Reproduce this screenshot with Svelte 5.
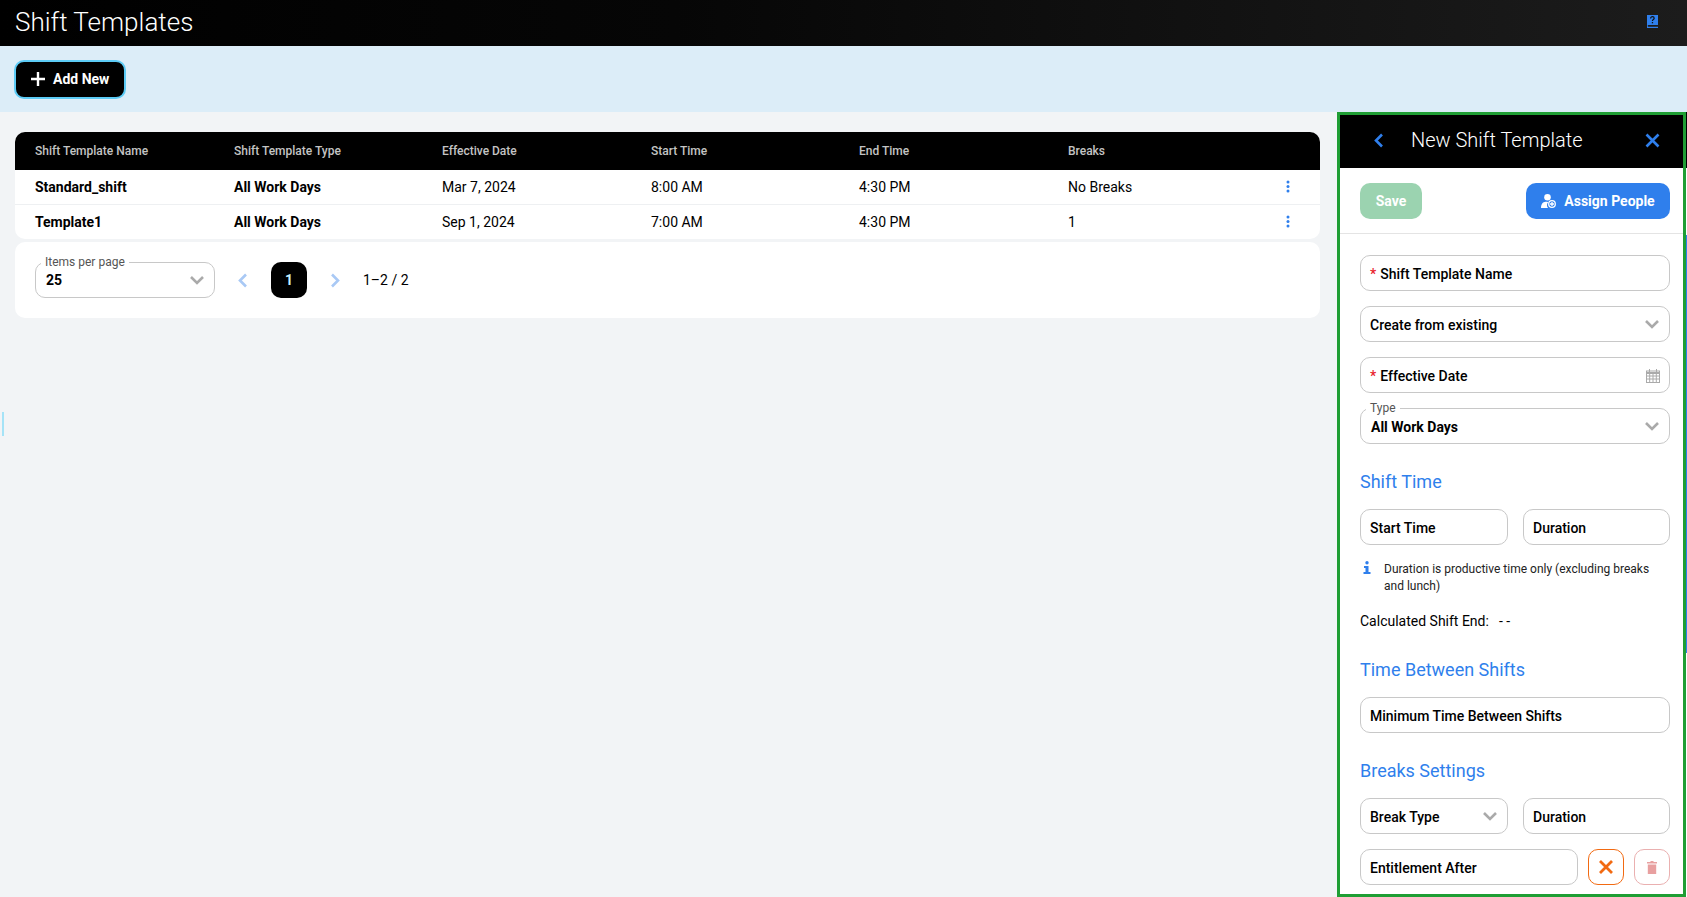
<script>
	const columns = ['Shift Template Name', 'Shift Template Type', 'Effective Date', 'Start Time', 'End Time', 'Breaks'];
	const rows = [
		{ name: 'Standard_shift', type: 'All Work Days', date: 'Mar 7, 2024', start: '8:00 AM', end: '4:30 PM', breaks: 'No Breaks' },
		{ name: 'Template1', type: 'All Work Days', date: 'Sep 1, 2024', start: '7:00 AM', end: '4:30 PM', breaks: '1' }
	];
</script>

{#snippet chevron()}
	<svg class="chevron" width="16" height="10" viewBox="0 0 16 10" fill="none">
		<path d="M2 2l6 6 6-6" stroke="#aaa" stroke-width="2.6" />
	</svg>
{/snippet}

<div class="page">
	<header class="topbar">
		<h1>Shift Templates</h1>
		<svg class="help" width="11" height="13" viewBox="0 0 11 13">
			<path d="M0 0h11v10H1.500a.8.800 0 0 0 0 1.700H11V13H0z" fill="#2f7fec" />
			<path d="M3.600 3.400C3.600 2.200 4.500 1.700 5.400 1.700s1.800.6 1.800 1.600c0 1.300-1.800 1.300-1.800 2.700" fill="none" stroke="#111" stroke-width="1.200" />
			<rect x="4.800" y="7" width="1.300" height="1.300" fill="#111" />
		</svg>
	</header>

	<div class="toolbar">
		<button class="add" type="button">
			<svg width="14" height="14" viewBox="0 0 14 14"><path d="M7 0v14M0 7h14" stroke="#fff" stroke-width="2.400" /></svg>
			Add New
		</button>
	</div>

	<div class="main">
		<section class="content">
			<div class="table">
				<div class="row head">
					{#each columns as col}
						<div>{col}</div>
					{/each}
				</div>
				{#each rows as row}
					<div class="row body">
						<div class="strong">{row.name}</div>
						<div class="strong">{row.type}</div>
						<div>{row.date}</div>
						<div>{row.start}</div>
						<div>{row.end}</div>
						<div class="breaks">
							{row.breaks}
							<svg width="4" height="13" viewBox="0 0 4 13" fill="#2f7fec">
								<circle cx="2" cy="2" r="1.500" /><circle cx="2" cy="6.500" r="1.500" /><circle cx="2" cy="11" r="1.500" />
							</svg>
						</div>
					</div>
				{/each}
			</div>

			<div class="pager">
				<div class="field per-page">
					<span class="legend">Items per page</span>
					<span class="value">25</span>
					{@render chevron()}
				</div>
				<svg class="arrow" width="11" height="15" viewBox="0 0 11 15" fill="none"><path d="M9 1.500L3 7.500l6 6" stroke="#a9c9f5" stroke-width="2.600" /></svg>
				<button class="page-num" type="button">1</button>
				<svg class="arrow" width="11" height="15" viewBox="0 0 11 15" fill="none"><path d="M2 1.500l6 6-6 6" stroke="#a9c9f5" stroke-width="2.600" /></svg>
				<span class="count">1–2 / 2</span>
			</div>
		</section>

		<aside class="panel">
			<div class="panel-head">
				<svg width="11" height="15" viewBox="0 0 11 15" fill="none"><path d="M9 1.500L3 7.500l6 6" stroke="#2f7fec" stroke-width="2.600" /></svg>
				<h2>New Shift Template</h2>
				<svg width="15" height="15" viewBox="0 0 15 15" fill="none"><path d="M1.500 1.500l12 12M13.500 1.500l-12 12" stroke="#2f7fec" stroke-width="2.600" /></svg>
			</div>

			<div class="actions">
				<button class="save" type="button">Save</button>
				<button class="assign" type="button">
					<svg width="15" height="14" viewBox="0 0 15 14" fill="#fff">
						<circle cx="6.500" cy="3.300" r="3.300" />
						<path d="M0 14c0-4 1.800-6 4.500-6.300 1-.1 2 0 2.700.5-1.500 1.500-1.700 4-.2 5.800z" />
						<circle cx="11" cy="10" r="3.300" fill="none" stroke="#fff" stroke-width="1.300" />
						<path d="M11 8v4M9 10h4" stroke="#fff" stroke-width="1.300" />
					</svg>
					Assign People
				</button>
			</div>

			<div class="form">
				<div class="field"><span class="req">*</span>Shift Template Name</div>
				<div class="field between">Create from existing{@render chevron()}</div>
				<div class="field between">
					<span><span class="req">*</span>Effective Date</span>
					<svg width="14" height="14" viewBox="0 0 14 14" fill="none" stroke="#aaa">
						<rect x=".5" y="2" width="13" height="11.500" />
						<path d="M0 4h14" stroke-width="2" /><path d="M3.500 0v3M10.500 0v3M.5 7h13M.5 10h13M3.700 4v9M7 4v9M10.300 4v9" />
					</svg>
				</div>
				<div class="field between typed">
					<span class="legend">Type</span>
					<span class="value">All Work Days</span>
					{@render chevron()}
				</div>

				<h3 class="first">Shift Time</h3>
				<div class="two">
					<div class="field">Start Time</div>
					<div class="field">Duration</div>
				</div>
				<div class="note">
					<svg width="8" height="13" viewBox="0 0 8 13" fill="#2f7fec">
						<circle cx="4" cy="1.800" r="1.700" /><path d="M1 5h4.500v6H7.500v2H.5v-2h2V7H1z" />
					</svg>
					<p>Duration is productive time only (excluding breaks and lunch)</p>
				</div>
				<div class="calc"><span>Calculated Shift End:</span><span>- -</span></div>

				<h3 class="between-shifts">Time Between Shifts</h3>
				<div class="field">Minimum Time Between Shifts</div>

				<h3 class="breaks-title">Breaks Settings</h3>
				<div class="two">
					<div class="field between">Break Type{@render chevron()}</div>
					<div class="field">Duration</div>
				</div>
				<div class="entitlement">
					<div class="field">Entitlement After</div>
					<button class="icon-btn cancel" type="button">
						<svg width="14" height="14" viewBox="0 0 14 14" fill="none"><path d="M1 1l12 12M13 1L1 13" stroke="#f26a12" stroke-width="2.800" /></svg>
					</button>
					<button class="icon-btn remove" type="button">
						<svg width="10" height="13" viewBox="0 0 10 13" fill="#e8a0a0"><path d="M3.500 0h3v1H10v1.500H0V1h3.500zM.8 3.500h8.400V13H.8z" /></svg>
					</button>
				</div>
			</div>
		</aside>
	</div>

	<span class="edge"></span>
	<span class="panel-edge"></span>
</div>

<style>
	:global(body) {
		margin: 0;
		font-family: Roboto, sans-serif;
		overflow: hidden;
	}

	.page {
		position: relative;
		display: flex;
		flex-direction: column;
		height: 897px;
		background: #f2f4f6;
		color: #000;
		font-size: 14px;
	}

	.topbar {
		display: flex;
		align-items: center;
		justify-content: space-between;
		box-sizing: border-box;
		height: 46px;
		padding: 0 29px 2px 15px;
		background: linear-gradient(90deg, #000 0%, #060606 40%, #1c1c1c 100%);
	}

	.help {
		margin-bottom: 1px;
	}

	h1 {
		margin: 0;
		color: #fff;
		font-size: 26px;
		font-weight: 300;
	}

	.toolbar {
		display: flex;
		align-items: center;
		height: 66px;
		padding-left: 14px;
		background: #dcedf8;
	}

	.add {
		display: flex;
		align-items: center;
		gap: 8px;
		height: 39px;
		padding: 0 15px;
		border: 2px solid #5ccbf5;
		border-radius: 10px;
		background: #000;
		color: #fff;
		font: 700 14px Roboto, sans-serif;
	}

	.main {
		display: flex;
		flex: 1;
		min-height: 0;
	}

	.content {
		flex: 1;
		padding: 20px 17px 0 15px;
	}

	.table {
		overflow: hidden;
		border-radius: 10px;
		background: #fff;
	}

	.row {
		display: grid;
		grid-template-columns: 199px 208px 209px 208px 209px 1fr;
		align-items: center;
		padding: 0 30px 0 20px;
	}

	.head {
		height: 38px;
		background: #000;
		color: #c4c4c4;
		font-size: 12px;
		font-weight: 500;
	}

	.body {
		height: 34px;
		padding-bottom: 1px;
		box-sizing: border-box;
	}

	.body + .body {
		border-top: 1px solid #eef0f2;
		height: 35px;
	}

	.strong {
		font-weight: 700;
	}

	.breaks {
		display: flex;
		align-items: center;
		justify-content: space-between;
	}

	.pager {
		display: flex;
		align-items: center;
		height: 76px;
		margin-top: 3px;
		padding-left: 20px;
		border-radius: 10px;
		background: #fff;
	}

	.field {
		position: relative;
		display: flex;
		align-items: center;
		box-sizing: border-box;
		height: 36px;
		padding: 1px 9px 0;
		border: 1px solid #c8c8c8;
		border-radius: 10px;
		background: #fff;
		font-weight: 500;
		white-space: nowrap;
	}

	.between {
		justify-content: space-between;
	}

	.between :global(.chevron) {
		margin-top: -1px;
	}

	.req {
		margin-right: 4px;
		color: #e8202a;
	}

	.legend {
		position: absolute;
		top: -7px;
		left: 5px;
		padding: 0 4px;
		background: #fff;
		color: #555;
		font-size: 12px;
		font-weight: 400;
		line-height: 13px;
	}

	.value {
		padding-left: 1px;
		font-weight: 700;
	}

	.per-page {
		justify-content: space-between;
		width: 180px;
		margin-right: 22px;
		padding: 0 9px;
	}

	.arrow {
		flex: none;
	}

	.page-num {
		width: 36px;
		height: 36px;
		margin: 0 23px;
		border: 0;
		border-radius: 10px;
		background: #000;
		color: #c8f0fb;
		font: 700 14px Roboto, sans-serif;
	}

	.count {
		margin-left: 22px;
	}

	.panel {
		flex: none;
		box-sizing: border-box;
		width: 349px;
		height: 785px;
		margin-right: 1px;
		overflow: hidden;
		border: 3px solid #1f9e34;
		background: #fff;
	}

	.panel-head {
		display: flex;
		align-items: center;
		box-sizing: border-box;
		height: 53px;
		padding: 0 23px 3px 33px;
		background: #000;
	}

	h2 {
		flex: 1;
		margin: 0 0 0 27px;
		color: #fff;
		font-size: 20px;
		font-weight: 300;
	}

	.actions {
		display: flex;
		align-items: center;
		justify-content: space-between;
		height: 66px;
		padding: 0 13px 0 20px;
		border-bottom: 1px solid #e4e4e4;
		box-sizing: border-box;
	}

	.save,
	.assign {
		display: flex;
		align-items: center;
		justify-content: center;
		height: 36px;
		border: 0;
		border-radius: 10px;
		color: #fff;
		font: 700 14px Roboto, sans-serif;
	}

	.save {
		width: 62px;
		background: #9bd3b0;
	}

	.assign {
		gap: 8px;
		width: 144px;
		background: #2f7fec;
	}

	.form {
		display: flex;
		flex-direction: column;
		gap: 15px;
		padding: 21px 13px 0 20px;
	}

	h3 {
		margin: 0;
		color: #2f7fec;
		font-size: 18px;
		font-weight: 400;
		line-height: 22px;
	}

	h3.first {
		margin-top: 12px;
		margin-bottom: 1px;
	}

	h3.between-shifts {
		margin-top: 15px;
		margin-bottom: 1px;
	}

	h3.breaks-title {
		margin-top: 12px;
		margin-bottom: 1px;
	}

	.two {
		display: grid;
		grid-template-columns: 148px 147px;
		gap: 15px;
	}

	.note {
		display: flex;
		gap: 13px;
		margin-top: 1px;
		padding-left: 3px;
		color: #222;
		font-size: 12px;
		line-height: 17px;
	}

	.note svg {
		flex: none;
	}

	.note p {
		margin: 0;
	}

	.calc {
		display: flex;
		gap: 10px;
		margin-top: 3px;
	}

	.entitlement {
		display: flex;
		gap: 10px;
	}

	.entitlement .field {
		flex: 1;
	}

	.icon-btn {
		display: flex;
		align-items: center;
		justify-content: center;
		flex: none;
		width: 36px;
		height: 36px;
		padding: 0;
		border-radius: 10px;
		background: #fff;
	}

	.cancel {
		border: 1px solid #f26a12;
	}

	.remove {
		border: 1px solid #eab0b0;
	}

	.edge {
		position: absolute;
		top: 412px;
		left: 2px;
		width: 2px;
		height: 24px;
		background: #a5e3f7;
	}

	.panel-edge {
		position: absolute;
		top: 112px;
		right: 0;
		width: 1px;
		height: 785px;
		background: linear-gradient(#000 0 56px, #fff 56px 123px, #2f7fec 123px 541px, #fff 541px);
	}
</style>
